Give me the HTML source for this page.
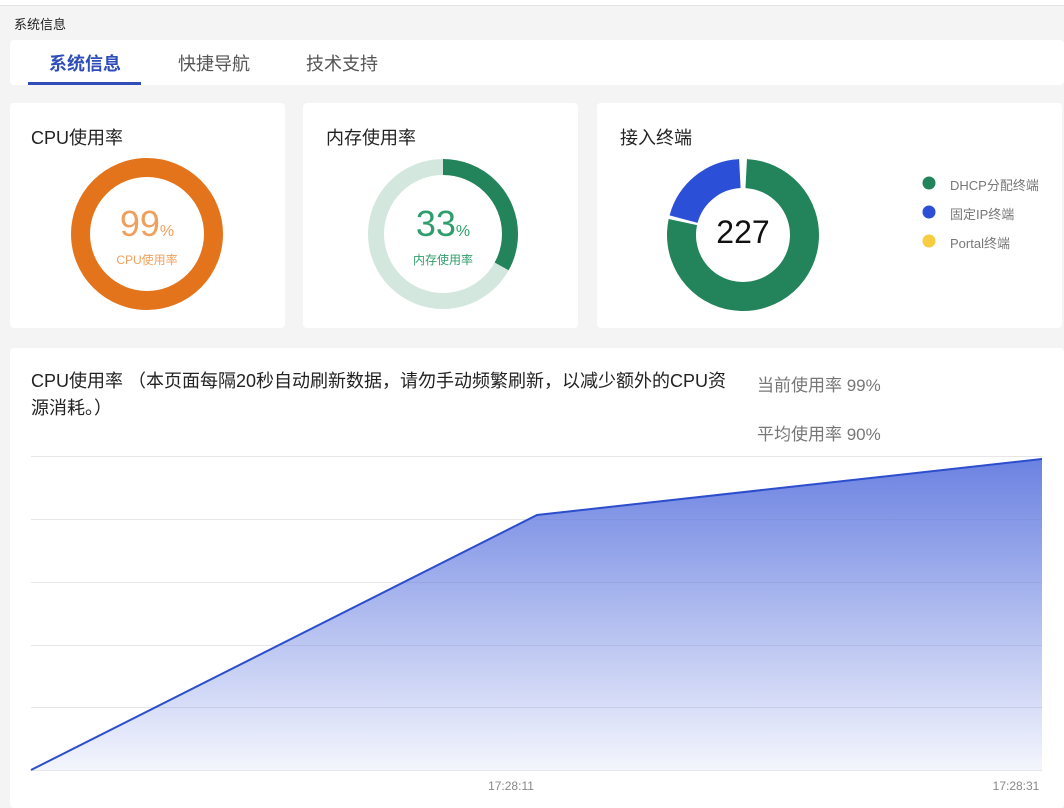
<!DOCTYPE html>
<html><head><meta charset="utf-8"><style>
*{margin:0;padding:0;box-sizing:border-box}
body{width:1064px;height:802px;background:#f4f4f5;font-family:"Liberation Sans","Noto Sans CJK SC",sans-serif;position:relative;overflow:hidden;color:#333}
.a{position:absolute}
.card{position:absolute;background:#fff;border-radius:4px}
</style></head><body>
<div class="a" style="left:0;top:0;width:1064px;height:6px;background:#fff;border-bottom:1px solid #e4e4e4"></div>
<div class="a" style="left:14px;top:14px;font-size:13px;color:#222">系统信息</div>
<div class="card" style="left:10px;top:40px;width:1054px;height:45px"></div>
<div class="a" style="left:49px;top:50px;font-size:18px;font-weight:bold;color:#2f4db8">系统信息</div>
<div class="a" style="left:28px;top:82px;width:113px;height:3px;background:#2f4db8"></div>
<div class="a" style="left:178px;top:50px;font-size:18px;color:#555">快捷导航</div>
<div class="a" style="left:306px;top:50px;font-size:18px;color:#555">技术支持</div>

<div class="card" style="left:10px;top:103px;width:275px;height:225px"></div>
<div class="card" style="left:303px;top:103px;width:275px;height:225px"></div>
<div class="card" style="left:597px;top:103px;width:465px;height:225px"></div>
<div class="a" style="left:31px;top:124px;font-size:18px;color:#222">CPU使用率</div>
<div class="a" style="left:326px;top:124px;font-size:18px;color:#222">内存使用率</div>
<div class="a" style="left:620px;top:124px;font-size:18px;color:#222">接入终端</div>

<svg class="a" style="left:0;top:0" width="1064" height="802">
<circle cx="147" cy="234" r="66.5" fill="none" stroke="#e3741b" stroke-width="19"/>
<circle cx="443" cy="234" r="67" fill="none" stroke="#d3e7de" stroke-width="16"/>
<circle cx="443" cy="234" r="67" fill="none" stroke="#23835b" stroke-width="16" stroke-dasharray="139 500" transform="rotate(-90 443 234)"/>
<circle cx="743" cy="235" r="61.5" fill="none" stroke="#23835b" stroke-width="29" stroke-dasharray="299.5 500" transform="rotate(-87 743 235)"/>
<circle cx="743" cy="235" r="61.5" fill="none" stroke="#2b4fd6" stroke-width="29" stroke-dasharray="77.3 500" transform="rotate(195 743 235)"/>
<circle cx="929" cy="183" r="6.5" fill="#23835b"/>
<circle cx="929" cy="212" r="6.5" fill="#2b4fd6"/>
<circle cx="929" cy="241" r="6.5" fill="#f6cd3e"/>
</svg>
<div class="a" style="left:97px;top:203px;width:100px;text-align:center;color:#f0a05e"><span style="font-size:36px">99</span><span style="font-size:16px">%</span></div>
<div class="a" style="left:97px;top:251px;width:100px;text-align:center;font-size:12px;color:#f0a05e">CPU使用率</div>
<div class="a" style="left:393px;top:203px;width:100px;text-align:center;color:#2f9e6c"><span style="font-size:36px">33</span><span style="font-size:16px">%</span></div>
<div class="a" style="left:393px;top:251px;width:100px;text-align:center;font-size:12px;color:#2f9e6c">内存使用率</div>
<div class="a" style="left:693px;top:214px;width:100px;text-align:center;font-size:32px;color:#111">227</div>
<div class="a" style="left:950px;top:175px;font-size:13px;color:#777">DHCP分配终端</div>
<div class="a" style="left:950px;top:204px;font-size:13px;color:#777">固定IP终端</div>
<div class="a" style="left:950px;top:233px;font-size:13px;color:#777">Portal终端</div>

<div class="card" style="left:10px;top:348px;width:1054px;height:460px"></div>
<div class="a" style="left:31px;top:368px;width:710px;font-size:18px;line-height:27px;color:#222">CPU使用率 （本页面每隔20秒自动刷新数据，请勿手动频繁刷新，以减少额外的CPU资源消耗。）</div>
<div class="a" style="left:757px;top:371px;font-size:17px;color:#777">当前使用率 99%</div>
<div class="a" style="left:757px;top:420px;font-size:17px;color:#777">平均使用率 90%</div>
<svg class="a" style="left:0;top:0" width="1064" height="802">
<defs><linearGradient id="g" x1="0" y1="0" x2="0" y2="1"><stop offset="0" stop-color="#5b74de" stop-opacity=".9"/><stop offset="1" stop-color="#5b74de" stop-opacity=".07"/></linearGradient></defs>
<g stroke="#e6e6e6" stroke-width="1">
<line x1="31" y1="456.5" x2="1042" y2="456.5"/><line x1="31" y1="519.5" x2="1042" y2="519.5"/><line x1="31" y1="582.5" x2="1042" y2="582.5"/><line x1="31" y1="645.5" x2="1042" y2="645.5"/><line x1="31" y1="707.5" x2="1042" y2="707.5"/><line x1="31" y1="770.5" x2="1042" y2="770.5"/>
</g>
<path d="M31 770 L537 515 L1042 459 L1042 770 Z" fill="url(#g)"/>
<path d="M31 770 L537 515 L1042 459" fill="none" stroke="#2c4dcc" stroke-width="2"/>
<text x="511" y="790" font-size="12" fill="#888" text-anchor="middle" font-family="Liberation Sans">17:28:11</text>
<text x="1016" y="790" font-size="12" fill="#888" text-anchor="middle" font-family="Liberation Sans">17:28:31</text>
</svg>
</body></html>
